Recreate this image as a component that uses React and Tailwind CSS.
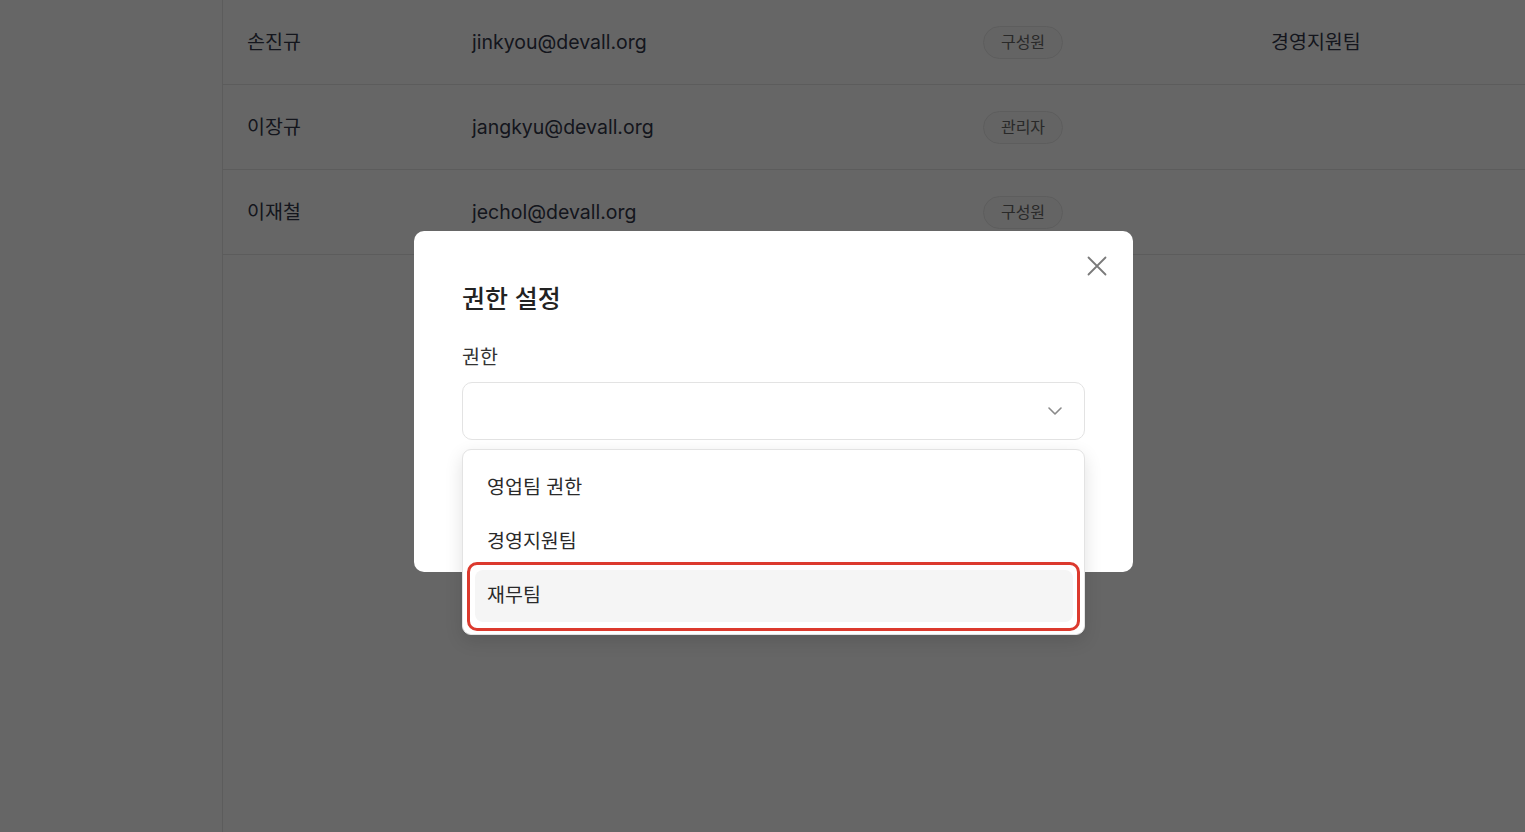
import React from 'react';

const members = [
  { name: '손진규', email: 'jinkyou@devall.org', role: '구성원', team: '경영지원팀' },
  { name: '이장규', email: 'jangkyu@devall.org', role: '관리자', team: '' },
  { name: '이재철', email: 'jechol@devall.org', role: '구성원', team: '' },
];

const options = ['영업팀 권한', '경영지원팀', '재무팀'];

const App = () => {
  return (
    <div
      className="relative w-full h-[832px] overflow-hidden bg-white flex"
      style={{ fontFamily: 'Inter, "Noto Sans CJK KR", sans-serif' }}
    >
      {/* page underneath */}
      <aside className="w-[223px] shrink-0 border-r border-[#e6e6e6]" />
      <main className="flex-1">
        {members.map((m) => (
          <div
            key={m.email}
            className="h-[85px] border-b border-[#e6e6e6] flex items-center text-[19.5px] text-[#33374a]"
          >
            <div className="w-[249px] pl-[24px] pt-[1px]">{m.name}</div>
            <div className="w-[511px] pt-[1px]">{m.email}</div>
            <div className="w-[288px]">
              <span className="inline-flex items-center justify-center w-[80px] h-[33px] rounded-full border border-[#e8e8e8] bg-[#fafafa] text-[16px] text-[#666]">
                {m.role}
              </span>
            </div>
            <div className="pt-[1px]">{m.team}</div>
          </div>
        ))}
      </main>

      {/* dim overlay */}
      <div className="absolute inset-0 bg-black/60" />

      {/* modal */}
      <div className="absolute left-[414px] top-[231px] w-[719px] h-[341px] bg-white rounded-[10px] px-[48px] pt-[53px]">
        <button className="absolute right-[26px] top-[25px] w-[20px] h-[20px] flex items-center justify-center">
          <svg width="20" height="20" viewBox="0 0 20 20" fill="none" stroke="#7a7a7a" strokeWidth="1.8" strokeLinecap="round">
            <path d="M1.5 1.5 L18.5 18.5 M18.5 1.5 L1.5 18.5" />
          </svg>
        </button>
        <h2 className="text-[25px] font-medium text-[#222] leading-[30px]">권한 설정</h2>
        <div className="mt-[31px] text-[19.5px] text-[#333] leading-[24px]">권한</div>
        <div className="relative mt-[13px]">
          <div className="h-[58px] w-full rounded-[10px] border-[1.5px] border-[#e3e3e3] flex items-center justify-end pr-[22px]">
            <svg width="14" height="8" viewBox="0 0 14 8" fill="none" stroke="#8a8a8a" strokeWidth="1.6" strokeLinecap="round" strokeLinejoin="round">
              <path d="M1 1 L7 7 L13 1" />
            </svg>
          </div>
          {/* dropdown list */}
          <div className="absolute left-0 right-0 top-[67px] bg-white rounded-[9px] border border-[#e3e3e3] shadow-[0_6px_18px_rgba(0,0,0,0.12)] p-[12px] pr-[11px] flex flex-col gap-[2px] z-10">
            {options.map((o, i) => (
              <div
                key={o}
                className={`relative h-[52px] flex items-center pl-[12px] rounded-[8px] text-[19.5px] text-[#2a2a2a] ${i === 2 ? 'bg-[#f5f5f5]' : ''}`}
              >
                {o}
                {i === 2 && (
                  <div className="absolute left-[-8px] right-[-7px] top-[-8px] bottom-[-9px] rounded-[10px] border-[3px] border-[#dc3a2e]" />
                )}
              </div>
            ))}
          </div>
        </div>
      </div>
    </div>
  );
};

export default App;
